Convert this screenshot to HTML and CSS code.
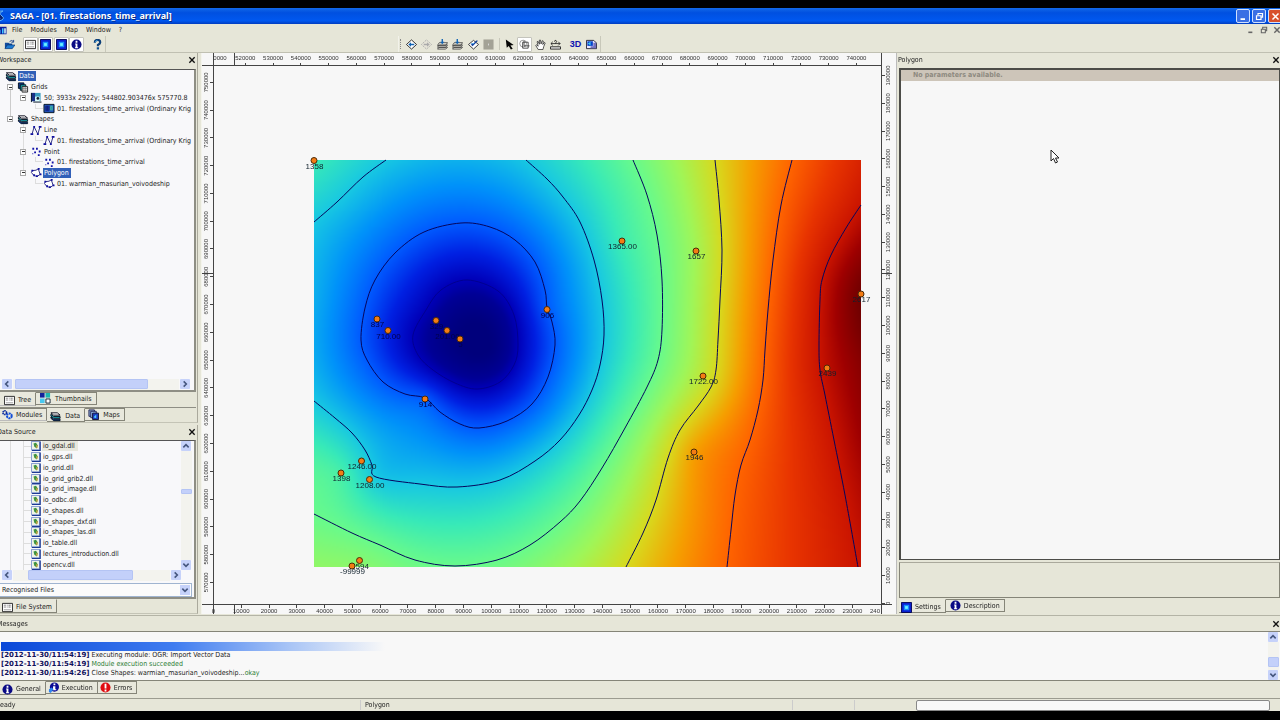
FILE: index.html
```html
<!DOCTYPE html>
<html lang="en">
<head>
<meta charset="utf-8">
<title>SAGA - [01. firestations_time_arrival]</title>
<link rel="stylesheet" href="styles.css">
</head>
<body>
<svg class="defs" aria-hidden="true">
  <defs>
    <symbol id="i-layers" viewBox="0 0 12 12"><path d="M1 2h7l3 2.500H4z" fill="#fff" stroke="#001"/><path d="M1 3.500L4 6h7v2H4L1 5.500z" fill="#1ca0a8" stroke="#012"/><path d="M1 6.500L4 9h7v1.500H4L1 8z" fill="#1238b0" stroke="#012"/></symbol>
    <symbol id="i-grids" viewBox="0 0 12 12"><path d="M1 1h6v6H1z" fill="#123a8c" stroke="#012"/><path d="M3 3h6v6H3z" fill="#19a5a5" stroke="#012"/><path d="M5 5h6v6H5z" fill="#fff" stroke="#222"/><path d="M7 5v6M9 5v6M5 7h6M5 9h6" stroke="#555" stroke-width=".6"/></symbol>
    <symbol id="i-system" viewBox="0 0 12 12"><path d="M1 1h10v9H1z" fill="#3a9cc0"/><path d="M1 1h4v9H1z" fill="#1a2f86"/><path d="M5 5h5v5H5z" fill="#dff"/><path d="M1 1v10M3 11h9" stroke="#012"/><circle cx="8" cy="7" r="1.500" fill="#123"/></symbol>
    <symbol id="i-grid" viewBox="0 0 12 12"><path d="M.5 1.500h11v9H.5z" fill="#2456b8" stroke="#012"/><path d="M2 3h4v6H2z" fill="#122a98"/><path d="M7 3h3v5H7z" fill="#3fc0b8"/><path d="M2 4.500h8M2 6.500h8M4 3v6M7 3v6" stroke="#113" stroke-width=".5" stroke-dasharray="1 1"/></symbol>
    <symbol id="i-line" viewBox="0 0 12 12"><path d="M1.500 10.500L4 2l4 8 2.500-8.500" fill="none" stroke="#22227c"/><path d="M0 9h3v2H0zM3 1h2v2H3zM7 9h2v2H7zM9 1h3v2H9z" fill="#1010a0"/></symbol>
    <symbol id="i-point" viewBox="0 0 12 12"><path d="M2 2h2v2H2zM6 2h2v2H6zM4 6h2v2H4zM9 5h2v2H9zM8 9h2v2H8zM2 8h1v1H2z" fill="#1212a8"/></symbol>
    <symbol id="i-poly" viewBox="0 0 12 12"><path d="M2 4l4-.5L8.500 2l2 6-3.500 2.500L3.500 9 1 6z" fill="#fff" stroke="#22227c"/><path d="M1 3h2v2H1zM8 1h2v2H8zM10 7h2v2h-2zM6 9h2v2H6zM3 8h2v2H3z" fill="#1010a0"/></symbol>
    <symbol id="i-open" viewBox="0 0 12 12"><path d="M1 4h4l1 1h3v5H1z" fill="#114b9c"/><path d="M1 10.500L3.500 6.500H12L9 10.500z" fill="#1c7bd4" stroke="#0a2a60" stroke-width=".6"/><path d="M6 3q2-2.500 4-.5M10.500 1v2.500H8" fill="none" stroke="#123c8c"/></symbol>
    <symbol id="i-win" viewBox="0 0 12 12"><path d="M.5 1.500h11v9H.5z" fill="#fff" stroke="#222"/><path d="M2 3.500h3M2 5.500h3M6 3.500h4M6 5.500h4" stroke="#555" stroke-dasharray="1 .6"/><path d="M2 8.500h8" stroke="#999"/></symbol>
    <symbol id="i-blue" viewBox="0 0 12 12"><path d="M.5.5h11v11H.5z" fill="#0a1fd0" stroke="#000050"/><path d="M3 3h6v6H3z" fill="#168cff"/><path d="M4.500 4.500h3v3h-3z" fill="#6ff4ff"/></symbol>
    <symbol id="i-info" viewBox="0 0 12 12"><circle cx="6" cy="6" r="5.500" fill="#0a0a84"/><path d="M5 2h2v2H5zM4.500 5H7v4h.8v1H4.300V9H5V6h-.5z" fill="#fff"/></symbol>
    <symbol id="i-exec" viewBox="0 0 12 12"><circle cx="7" cy="5.500" r="5" fill="#0a0a94"/><path d="M6 1.500h2v2H6zM5.500 4.500H8v3.500h1v1H5.500z" fill="#fff"/><path d="M1 8l3-2 2 2-3 4-2-1z" fill="#2f86f0"/></symbol>
    <symbol id="i-err" viewBox="0 0 12 12"><circle cx="6" cy="6" r="5.500" fill="#e00c10"/><path d="M5 2h2v5H5zM5 8.300h2v2H5z" fill="#fff"/></symbol>
    <symbol id="i-help" viewBox="0 0 12 12"><path d="M3 4q0-3 3-3t3 2.500Q9 5 6.500 6.500V8" fill="none" stroke="#0d3f78" stroke-width="2.400"/><path d="M3.500 3.500Q4 1.500 6 1.500" fill="none" stroke="#3da4e8"/><path d="M5.200 9h2.500v2.400H5.200z" fill="#0d4f90"/></symbol>
    <symbol id="i-prev" viewBox="0 0 12 12"><path d="M6 1l5.500 5L6 11 .5 6z" fill="#fff" stroke="#222"/><path d="M2.500 6l3-2.500v1.700h3.500v1.600H5.500v1.700z" fill="#1264b4"/></symbol>
    <symbol id="i-next" viewBox="0 0 12 12"><path d="M6 1l5.500 5L6 11 .5 6z" fill="#e6e4d8" stroke="#aaa" stroke-dasharray="2 1"/><path d="M9.500 6l-3-2.500v1.700H3v1.600h3.500v1.700z" fill="#aaa"/></symbol>
    <symbol id="i-stack" viewBox="0 0 12 12"><path d="M.5 11l2-2h9l-2 2zM.5 9l2-2.500h9l-2 2.500zM.5 7l2-3h9l-2 3z" fill="#e4e4da" stroke="#333" stroke-width=".8"/><path d="M5 0h1.500v3H8L5.700 5.800 3.500 3H5z" fill="#1264b4"/></symbol>
    <symbol id="i-sel" viewBox="0 0 12 12"><path d="M6 1.500L11.500 6 6 11 .5 6z" fill="#fff" stroke="#333"/><path d="M3 6l2 2 6-6-2-.5-3 3.500z" fill="#123f9c"/><path d="M3.500 5h3" stroke="#3f9de0"/></symbol>
    <symbol id="i-gray" viewBox="0 0 12 12"><path d="M.5.500h11v11H.5z" fill="#a3a296"/><path d="M6 5v2" stroke="#ddd"/></symbol>
    <symbol id="i-arrow" viewBox="0 0 12 12"><path d="M2 .5l1 9 2.200-2L7.500 11.500l2-1L7 7l3.500-.5z" fill="#050505"/></symbol>
    <symbol id="i-zoom" viewBox="0 0 12 12"><circle cx="4.500" cy="5" r="3.700" fill="none" stroke="#777" stroke-width=".8"/><path d="M4 3.500h6V10H4zM5.500 2v5.500H11.500" fill="none" stroke="#333" stroke-width=".9"/></symbol>
    <symbol id="i-hand" viewBox="0 0 12 12"><path d="M3.500 11.500L.8 7l1-.6 1.700 1.500L2.300 3l1-.5 1.500 3.200L4.800 1.200h1.200l.6 4.200L8 1.800l1 .4-.5 3.800 1.700-2.300.9.600-1.600 4-.8 3.200z" fill="#fff" stroke="#222" stroke-width=".8"/></symbol>
    <symbol id="i-measure" viewBox="0 0 12 12"><path d="M.5 11V8.500h11V11z" fill="#eee" stroke="#222"/><path d="M1 5h10M3 3L1 5l2 2M9 3l2 2-2 2M5 3q0-2 1.500-1.500T6 5" fill="none" stroke="#222" stroke-width=".9"/></symbol>
    <symbol id="i-print" viewBox="0 0 12 12"><path d="M.5 1.500h8l3 3v6H.5z" fill="#e8e8ff" stroke="#223"/><path d="M1.500 2.500h6v5h-6z" fill="#0840c8"/><path d="M2 5l3-2v4z" fill="#3cd0f0"/><path d="M8 4h3v6H5V8h3z" fill="#7472c0"/></symbol>
    <symbol id="i-thumbs" viewBox="0 0 12 12"><path d="M0 0h5v5H0z" fill="#12229c"/><path d="M6 0h5v5H6z" fill="#1fb6b0"/><path d="M0 6h5v5H0z" fill="#48c8f0"/><path d="M6.500 6.500h4.500v4.500H6.500z" fill="#fff" stroke="#123"/></symbol>
    <symbol id="i-gears" viewBox="0 0 12 12"><circle cx="3" cy="4" r="2" fill="none" stroke="#0b2b9c" stroke-width="1.800" stroke-dasharray="1.500 .5"/><circle cx="8" cy="7.500" r="2.600" fill="none" stroke="#1550d8" stroke-width="2.200" stroke-dasharray="2 .6"/></symbol>
    <symbol id="i-maps" viewBox="0 0 12 12"><path d="M1 1h6v7H1z" fill="#8ac" stroke="#225"/><path d="M3 2.500h6v7H3z" fill="#9be" stroke="#225"/><path d="M5 4.500h6.500v7H5z" fill="#1a3cc0" stroke="#113"/><path d="M6 9l3-3v4z" fill="#4bd0ff"/></symbol>
    <symbol id="i-dll" viewBox="0 0 12 12"><path d="M.5.500h10v10H.5z" fill="#eef4e8" stroke="#6c86c8"/><path d="M11 .5V11.500H1" fill="none" stroke="#1c3a94" stroke-width="1.500"/><path d="M3 3l3-1 2 3-1 4-3-2z" fill="#3f9440"/><path d="M6 5h2v3H6z" fill="#c0a040"/></symbol>
    <symbol id="i-saga" viewBox="0 0 12 12"><path d="M9 1Q1 1 4 5t1 6Q12 9 8 6T9 1z" fill="#0a2070" stroke="#5fb4ff"/></symbol>
    <symbol id="i-app" viewBox="0 0 12 12"><path d="M0 1h12v10H0z" fill="#0a1c9c"/><path d="M1 5h3v5H1zM6 3h2v7H6z" fill="#3fc8ff"/><path d="M9 3h2v7H9z" fill="#dff"/></symbol>
    <symbol id="i-x" viewBox="0 0 12 12"><path d="M2 2l8 8M10 2l-8 8" fill="none" stroke="currentColor" stroke-width="2"/></symbol>
    <symbol id="i-min" viewBox="0 0 12 12"><path d="M2 9.500h6" stroke="currentColor" stroke-width="2.400"/></symbol>
    <symbol id="i-rest" viewBox="0 0 12 12"><path d="M4 4V2h6v5H8M2 5h6v5H2z" fill="none" stroke="currentColor" stroke-width="1.600"/></symbol>
    <symbol id="i-left" viewBox="0 0 12 12"><path d="M8 2L4 6l4 4" fill="none" stroke="currentColor" stroke-width="2.400"/></symbol>
    <symbol id="i-right" viewBox="0 0 12 12"><path d="M4 2l4 4-4 4" fill="none" stroke="currentColor" stroke-width="2.400"/></symbol>
    <symbol id="i-up" viewBox="0 0 12 12"><path d="M2 8l4-4 4 4" fill="none" stroke="currentColor" stroke-width="2.400"/></symbol>
    <symbol id="i-down" viewBox="0 0 12 12"><path d="M2 4l4 4 4-4" fill="none" stroke="currentColor" stroke-width="2.400"/></symbol>
  </defs>
</svg>
<div class="app">
  <header class="title">
    <svg class="ico logo"><use href="#i-saga"/></svg>
    <h1>SAGA - [01. firestations_time_arrival]</h1>
    <div class="winbtns">
      <button aria-label="Minimize"><svg class="ico"><use href="#i-min"/></svg></button>
      <button aria-label="Restore"><svg class="ico"><use href="#i-rest"/></svg></button>
      <button class="red" aria-label="Close"><svg class="ico"><use href="#i-x"/></svg></button>
    </div>
  </header>
  <nav class="menu">
    <svg class="ico app-ico"><use href="#i-app"/></svg>
    <button>File</button><button>Modules</button><button>Map</button><button>Window</button><button>?</button>
    <div class="mdi">
      <button aria-label="Minimize map"><svg class="ico"><use href="#i-min"/></svg></button>
      <button aria-label="Restore map"><svg class="ico"><use href="#i-rest"/></svg></button>
      <button aria-label="Close map"><svg class="ico"><use href="#i-x"/></svg></button>
    </div>
  </nav>
  <div class="toolbars">
    <div class="bar first">
      <button aria-label="Open"><svg class="ico"><use href="#i-open"/></svg></button>
      <div class="pressed-group">
        <button class="on" aria-label="Show data source"><svg class="ico"><use href="#i-win"/></svg></button>
        <button class="on" aria-label="Show workspace"><svg class="ico"><use href="#i-blue"/></svg></button>
        <button class="on" aria-label="Show properties"><svg class="ico"><use href="#i-blue"/></svg></button>
        <button class="on" aria-label="Show messages"><svg class="ico"><use href="#i-info"/></svg></button>
      </div>
      <button aria-label="Help"><svg class="ico"><use href="#i-help"/></svg></button>
    </div>
    <div class="bar second">
      <span class="grip"></span>
      <div class="group g6">
        <button aria-label="Previous extent"><svg class="ico"><use href="#i-prev"/></svg></button>
        <button aria-label="Next extent"><svg class="ico"><use href="#i-next"/></svg></button>
        <button aria-label="Full extent"><svg class="ico"><use href="#i-stack"/></svg></button>
        <button aria-label="Layer extent"><svg class="ico"><use href="#i-stack"/></svg></button>
        <button aria-label="Selection extent"><svg class="ico"><use href="#i-sel"/></svg></button>
        <button aria-label="Synchronise" disabled><svg class="ico"><use href="#i-gray"/></svg></button>
      </div>
      <span class="sep"></span>
      <div class="group g4">
        <button aria-label="Action"><svg class="ico"><use href="#i-arrow"/></svg></button>
        <button class="on" aria-label="Zoom"><svg class="ico"><use href="#i-zoom"/></svg></button>
        <button aria-label="Pan"><svg class="ico"><use href="#i-hand"/></svg></button>
        <button aria-label="Measure"><svg class="ico"><use href="#i-measure"/></svg></button>
      </div>
      <div class="group g2">
        <button class="three-d">3D</button>
        <button aria-label="Print layout"><svg class="ico"><use href="#i-print"/></svg></button>
      </div>
    </div>
  </div>

  <main class="work">
    <aside class="left">
      <section class="pane workspace">
        <header class="cap"><h2>Workspace</h2><button aria-label="Close workspace"><svg class="ico"><use href="#i-x"/></svg></button></header>
        <div class="frame">
          <ul class="tree">
            <li class="l0"><svg class="ico"><use href="#i-layers"/></svg><span class="hit">Data</span></li>
            <li class="l1"><button class="exp" aria-label="Collapse Grids"></button><svg class="ico"><use href="#i-grids"/></svg><span>Grids</span></li>
            <li class="l2"><button class="exp" aria-label="Collapse grid system"></button><svg class="ico"><use href="#i-system"/></svg><span>50; 3933x 2922y; 544802.903476x 575770.8</span></li>
            <li class="l3"><i class="elbow"></i><svg class="ico"><use href="#i-grid"/></svg><span>01. firestations_time_arrival (Ordinary Krig</span></li>
            <li class="l1"><button class="exp" aria-label="Collapse Shapes"></button><svg class="ico"><use href="#i-layers"/></svg><span>Shapes</span></li>
            <li class="l2"><button class="exp" aria-label="Collapse Line"></button><svg class="ico"><use href="#i-line"/></svg><span>Line</span></li>
            <li class="l3"><i class="elbow"></i><svg class="ico"><use href="#i-line"/></svg><span>01. firestations_time_arrival (Ordinary Krig</span></li>
            <li class="l2"><button class="exp" aria-label="Collapse Point"></button><svg class="ico"><use href="#i-point"/></svg><span>Point</span></li>
            <li class="l3"><i class="elbow"></i><svg class="ico"><use href="#i-point"/></svg><span>01. firestations_time_arrival</span></li>
            <li class="l2"><button class="exp" aria-label="Collapse Polygon"></button><svg class="ico"><use href="#i-poly"/></svg><span class="hit">Polygon</span></li>
            <li class="l3"><i class="elbow"></i><svg class="ico"><use href="#i-poly"/></svg><span>01. warmian_masurian_voivodeship</span></li>
          </ul>
          <div class="hscroll wide"><button aria-label="Scroll left"><svg class="ico"><use href="#i-left"/></svg></button><div class="track"><div class="thumb"></div></div><button aria-label="Scroll right"><svg class="ico"><use href="#i-right"/></svg></button></div>
        </div>
        <div class="tabs inner"><button class="tab cur"><svg class="ico"><use href="#i-win"/></svg>Tree</button><button class="tab"><svg class="ico"><use href="#i-thumbs"/></svg>Thumbnails</button></div>
        <div class="tabs outer"><button class="tab"><svg class="ico"><use href="#i-gears"/></svg>Modules</button><button class="tab cur"><svg class="ico"><use href="#i-layers"/></svg>Data</button><button class="tab"><svg class="ico"><use href="#i-maps"/></svg>Maps</button></div>
      </section>
      <section class="pane source">
        <header class="cap"><h2>Data Source</h2><button aria-label="Close data source"><svg class="ico"><use href="#i-x"/></svg></button></header>
        <div class="frame files">
          <div class="listrow">
            <ul class="tree dlls">
              <li><svg class="ico"><use href="#i-dll"/></svg><span class="dim">io_gdal.dll</span></li>
              <li><svg class="ico"><use href="#i-dll"/></svg><span>io_gps.dll</span></li>
              <li><svg class="ico"><use href="#i-dll"/></svg><span>io_grid.dll</span></li>
              <li><svg class="ico"><use href="#i-dll"/></svg><span>io_grid_grib2.dll</span></li>
              <li><svg class="ico"><use href="#i-dll"/></svg><span>io_grid_image.dll</span></li>
              <li><svg class="ico"><use href="#i-dll"/></svg><span>io_odbc.dll</span></li>
              <li><svg class="ico"><use href="#i-dll"/></svg><span>io_shapes.dll</span></li>
              <li><svg class="ico"><use href="#i-dll"/></svg><span>io_shapes_dxf.dll</span></li>
              <li><svg class="ico"><use href="#i-dll"/></svg><span>io_shapes_las.dll</span></li>
              <li><svg class="ico"><use href="#i-dll"/></svg><span>io_table.dll</span></li>
              <li><svg class="ico"><use href="#i-dll"/></svg><span>lectures_introduction.dll</span></li>
              <li><svg class="ico"><use href="#i-dll"/></svg><span>opencv.dll</span></li>
            </ul>
            <div class="vscroll"><button aria-label="Scroll up"><svg class="ico"><use href="#i-up"/></svg></button><div class="track"><div class="thumb"></div></div><button aria-label="Scroll down"><svg class="ico"><use href="#i-down"/></svg></button></div>
          </div>
          <div class="hscroll narrow"><button aria-label="Scroll left"><svg class="ico"><use href="#i-left"/></svg></button><div class="track"><div class="thumb"></div></div><button aria-label="Scroll right"><svg class="ico"><use href="#i-right"/></svg></button></div>
          <div class="combo"><select aria-label="File filter"><option>Recognised Files</option></select><svg class="ico"><use href="#i-down"/></svg></div>
        </div>
        <div class="tabs inner"><button class="tab cur"><svg class="ico"><use href="#i-win"/></svg>File System</button></div>
      </section>
    </aside>

    <section class="map">
      <svg id="map" viewBox="202 53 694 561" role="img" aria-label="Map of arrival times">
        <foreignObject x="314" y="160" width="547" height="407"><canvas id="raster" width="274" height="204"></canvas></foreignObject>
      </svg>
    </section>

    <aside class="right">
      <header class="cap"><h2>Polygon</h2><button aria-label="Close settings"><svg class="ico"><use href="#i-x"/></svg></button></header>
      <div class="params"><p>No parameters available.</p>
        <svg class="pointer" viewBox="0 0 10 15"><path d="M1 1v11l2.500-2.500L5.500 14l2-1-2-4H9z" fill="#fff" stroke="#222"/></svg>
      </div>
      <div class="desc"></div>
      <div class="tabs inner"><button class="tab cur"><svg class="ico"><use href="#i-blue"/></svg>Settings</button><button class="tab"><svg class="ico"><use href="#i-info"/></svg>Description</button></div>
    </aside>
  </main>

  <section class="messages">
    <header class="cap"><h2>Messages</h2><button aria-label="Close messages"><svg class="ico"><use href="#i-x"/></svg></button></header>
    <div class="log">
      <div class="lines">
        <div class="band"></div>
        <p><b>[2012-11-30/11:54:19]</b> Executing module: OGR: Import Vector Data</p>
        <p><b>[2012-11-30/11:54:19]</b> <span class="ok">Module execution succeeded</span></p>
        <p><b>[2012-11-30/11:54:26]</b> Close Shapes: warmian_masurian_voivodeship...<span class="ok">okay</span></p>
      </div>
      <div class="vscroll"><button aria-label="Scroll up"><svg class="ico"><use href="#i-up"/></svg></button><div class="track"><div class="thumb"></div></div><button aria-label="Scroll down"><svg class="ico"><use href="#i-down"/></svg></button></div>
    </div>
    <div class="tabs inner"><button class="tab cur"><svg class="ico"><use href="#i-info"/></svg>General</button><button class="tab"><svg class="ico"><use href="#i-exec"/></svg>Execution</button><button class="tab"><svg class="ico"><use href="#i-err"/></svg>Errors</button></div>
  </section>
  <footer class="status"><span class="ready">Ready</span><span class="layer">Polygon</span><span class="cell"></span><span class="cell"></span><div class="progress" role="progressbar" aria-label="Progress" aria-valuenow="0"></div></footer>
</div>
<script src="map.js"></script>
</body>
</html>
```
FILE: styles.css
```css
* { box-sizing: border-box; }
html, body { height: 100%; margin: 0; }
body { background: #000; color: #222; font: 7px/10px "DejaVu Sans Condensed", "DejaVu Sans", sans-serif; overflow: hidden; }
button, select { font: inherit; color: inherit; background: none; border: 0; margin: 0; padding: 0; display: inline-flex; align-items: center; justify-content: center; white-space: nowrap; }
h1, h2, p, ul { margin: 0; padding: 0; font: inherit; list-style: none; white-space: nowrap; }
.defs { display: none; }
.ico { width: 11px; height: 11px; flex: none; display: block; }
.app { height: 100vh; padding: 8px 0 9px; display: flex; flex-direction: column; background: #e6e6d8; background-clip: content-box; }

.title { height: 16px; flex: none; display: flex; align-items: center; background: linear-gradient(#1268e8, #0050e0 30%, #0058f0 80%, #003cc0); color: #fff; }
.title h1 { font: bold 9px/12px "Noto Sans", "Open Sans", sans-serif; padding-left: 4px; flex: 1; text-shadow: 1px 1px 0 #0a2a80; }
.logo { width: 12px; height: 12px; margin-left: -6px; }
.winbtns { display: flex; gap: 2px; margin-right: -2px; }
.winbtns button { width: 14px; height: 14px; border: 1px solid #cfe0ff; border-radius: 2px; background: #3b6fe4; }
.winbtns .red { background: #d8502c; }
.winbtns .ico { width: 9px; height: 9px; }

.menu { height: 12px; flex: none; display: flex; align-items: center; gap: 8px; }
.menu .app-ico { width: 12px; height: 9px; margin-left: -4px; margin-right: -4px; }
.mdi { margin-left: auto; display: flex; gap: 5px; color: #666; margin-right: -1px; }
.mdi .ico { width: 8px; height: 8px; }

.toolbars { height: 17px; flex: none; display: flex; border-bottom: 1px solid #c0c0b2; }
.bar { display: flex; align-items: center; border-right: 1px solid #c8c8ba; }
.bar button { width: 15px; height: 15px; }
.bar .on { background: #fff; border: 1px solid #c4c4bc; border-radius: 1px; }
.first { width: 106px; padding-left: 2px; gap: 6px; flex: none; }
.pressed-group { display: flex; justify-content: space-between; width: 62px; }
.second { margin-left: 292px; padding: 0 1px; border-left: 1px solid #f2f2ea; }
.grip { width: 1px; height: 10px; border-left: 1px dotted #888; margin: 0 3px 0 0; }
.group { display: flex; justify-content: space-between; }
.g6 { width: 92px; }
.g4 { width: 61px; margin-right: 5px; }
.g2 { width: 31px; }
.sep { height: 12px; border-left: 1px solid #c8c8ba; margin: 0 2px 0 3px; }
.bar .three-d { font: bold 9px/10px "Liberation Sans", sans-serif; color: #0c10b0; }

.work { flex: 1; min-height: 0; display: grid; grid-template-columns: 202px minmax(0, 1fr) 30%; }
.cap { height: 13px; flex: none; display: flex; align-items: center; justify-content: space-between; }
.cap h2 { margin-left: -3px; }
.cap .ico { width: 8px; height: 8px; color: #111; }

.left { display: flex; flex-direction: column; gap: 2px; padding-right: 3px; border-right: 1px solid #f4f4ec; min-width: 0; }
.pane { display: flex; flex-direction: column; min-height: 0; border-right: 1px solid #aaa99c; padding-right: 1px; border-bottom: 1px solid #c4c4b6; }
.workspace { height: 370px; flex: none; }
.source { flex: 1; }
.frame { flex: 1; min-height: 0; margin-top: 3px; border-top: 1px solid #555; border-right: 2px solid #8e8e84; border-bottom: 2px solid #8e8e84; background: #f8f8fa; display: flex; flex-direction: column; overflow: hidden; padding-right: 2px; }
.source .frame { margin-top: 2px; }
.tree { height: 118px; flex: none; display: flex; flex-direction: column; margin-top: 1px; overflow: hidden; }
.workspace .tree { background: linear-gradient(#ccc, #ccc) 10px 14px / 1px 34px no-repeat, linear-gradient(#ddd, #ddd) 23px 52px / 1px 50px no-repeat; }
.tree li { flex: 1; min-height: 0; display: flex; align-items: center; }
.tree .ico { margin-right: 2px; }
.l0 { padding-left: 5px; }
.l1 { padding-left: 7px; }
.l2 { padding-left: 20px; }
.l3 { padding-left: 31px; }
.tree li > .ico { width: 12px; }
.exp { width: 6px; height: 6px; margin-right: 4px; border: 1px solid #a8a8a8; background: linear-gradient(#333, #333) center / 3px 1px no-repeat #fff; flex: none; }
.elbow { width: 8px; height: 5px; border-left: 1px solid #ddd; border-bottom: 1px solid #ddd; margin: 0 0 5px 4px; flex: none; }
.hit { background: #3160b8; color: #fff; padding: 0 2px 0 1px; margin-left: -1px; }
.workspace .hscroll { margin-top: auto; margin-bottom: 0; }
.hscroll { display: flex; height: 11px; flex: none; gap: 1px; margin: 0 2px 1px; }
.hscroll button, .vscroll button { width: 10px; height: 10px; background: #c6d2fa; border-radius: 1px; color: #45567e; flex: none; }
.hscroll .ico, .vscroll .ico { width: 8px; height: 8px; }
.track { flex: 1; background: #f3f3ee; }
.thumb { background: #c3d0fa; border: 1px solid #b4c4f4; border-radius: 1px; }
.hscroll .thumb { height: 10px; }
.wide .thumb { width: 80%; margin-left: 2px; }
.narrow { margin-right: 11px; }
.narrow .thumb { width: 67%; margin-left: 15px; }
.vscroll { width: 11px; display: flex; flex-direction: column; flex: none; }

.listrow { display: flex; }
.dlls { height: 129px; flex: 1; margin-top: 0; background: linear-gradient(#ddd, #ddd) 10px 0 / 1px 129px no-repeat, linear-gradient(#ddd, #ddd) 23px 0 / 1px 129px no-repeat; }
.dlls li::before { content: ""; width: 7px; border-top: 1px solid #ddd; margin-left: 24px; }
.dlls li > .ico { width: 10px; height: 10px; margin-right: 2px; }
.dim { background: #e8e8de; padding: 0 3px 0 1px; margin-left: -1px; }
.listrow .thumb { height: 5px; margin-top: 38px; }
.listrow .vscroll { margin-right: 0; }
.combo { display: flex; align-items: center; height: 14px; margin-top: auto; border: 1px solid #9fb4d0; border-left: 0; background: #fbfbfb; padding: 0 1px 0 2px; }
.combo select { appearance: none; flex: 1; outline: 0; display: block; }
.combo .ico { background: #c6d2fa; color: #45567e; width: 10px; height: 10px; padding: 1px; }

.tabs { display: flex; flex: none; height: 15px; align-items: flex-start; }
.source .tabs { height: 14px; }
.tab { height: 13px; gap: 3px; padding: 0 4px 0 2px; border: solid #858578; border-width: 1px 1px 1px 0; background: #e8e8dc; }
.tab.cur { border-top-color: transparent; height: 14px; padding-top: 2px; }
.tab .ico { width: 11px; height: 11px; }
.workspace .inner .tab { padding-left: 4px; }
.workspace .inner .tab:last-child { gap: 4px; }
.workspace .tabs.outer { border-top: 1px solid #8e8e84; }
.workspace .outer .tab + .tab { gap: 4px; padding-left: 3px; }
.workspace .tabs.outer .tab:first-child, .workspace .tabs.inner .tab.cur { border-left: 0; border-bottom-color: #bbb; }

.map { min-width: 0; background: #f7f7f7; display: flex; }
#map { width: 100%; height: 100%; display: block; }
#raster { width: 547px; height: 407px; display: block; }
.axis { font: 6px "Liberation Sans", Arial, sans-serif; fill: #333; text-anchor: middle; }
.rule { stroke: #444; stroke-width: 1; shape-rendering: crispEdges; fill: none; }
.contour { fill: none; stroke: #06065c; stroke-width: 1; }
.contour.deep { stroke: #000090; }
.station circle { fill: #f47c14; stroke: #4a2a08; }
.station text { font: 8px "Liberation Sans", Arial, sans-serif; fill: #10202c; text-anchor: middle; }
.station .dark { fill: #00004c; }

.right { display: flex; flex-direction: column; padding-left: 2px; border-left: 1px solid #bbb; min-width: 0; }
.right .cap h2 { margin-left: -1px; }
.params { flex: 1; position: relative; margin-top: 2px; border: solid #4c4c48; border-width: 2px 1px 1px 2px; background: #f7f7f7; }
.params p { height: 11px; background: #cdc5b9; color: #8d8a80; font-weight: bold; padding-left: 12px; }
.pointer { position: absolute; left: 39.5%; top: 79px; width: 10px; height: 15px; }
.desc { height: 36px; flex: none; margin-top: 2px; border: 1px solid #858578; border-top-color: #aaa99c; }
.right .tabs { margin-top: 1px; }
.right .tab { padding-left: 4px; }
.right .tab.cur { padding-left: 2px; }

.messages { flex: none; display: flex; flex-direction: column; border-top: 1px solid #b4b4a6; margin-top: 1px; padding-top: 1px; }
.log { display: flex; height: 50px; border: solid #858578; border-width: 1px 0; margin-top: 1px; background: #f8f8f8; padding: 0 1px; }
.lines { flex: 1; padding-top: 10px; }
.lines p { line-height: 9px; }
.lines b { color: #10105c; font-family: "DejaVu Sans", sans-serif; }
.ok { color: #2c7c34; }
.band { height: 9px; width: 384px; background: linear-gradient(90deg, #0a48d8, #3f7cf0 45%, #a8c4f6 75%, #f8f8f8); }
.log .thumb { height: 10px; margin-top: 15px; }
.messages .tabs { height: 17px; }

.status { height: 13px; flex: none; border-top: 1px solid #9c9c90; display: flex; align-items: center; }
.ready { width: 364px; margin-left: -4px; }
.layer { flex: 1; padding-left: 4px; border-left: 1px solid #ccc; }
.cell { width: 62px; height: 10px; border-left: 1px solid #ccc; }
.progress { width: 354px; height: 11px; margin-right: 10px; border: 1px solid #888; border-radius: 2px; background: #f8f8f8; }
```
FILE: map.js
```js
const NS = 'http://www.w3.org/2000/svg';
const map = document.getElementById('map');

function add(parent, tag, attrs, text) {
  const el = document.createElementNS(NS, tag);
  for (const k in attrs) el.setAttribute(k, attrs[k]);
  if (text !== undefined) el.textContent = text;
  parent.appendChild(el);
  return el;
}

const contours = [
  { v: 1200, p: [314,222, 337,202, 363,177, 386,160] },
  { v: 1200, p: [526,160, 547,179, 563,197, 580,222, 594,260, 602,300, 604,335, 600,365, 592,390, 579,415, 560,440, 535,461, 500,480, 457,487, 420,484, 376,477, 372,465, 365,450, 352,433, 335,418, 314,401] },
  { v: 900, closed: true, p: [461,223, 424,232, 395,253, 375,280, 365,308, 361,340, 367,360, 383,382, 405,394, 425,398, 440,412, 460,424, 479,428, 507,421, 532,404, 548,377, 555,345, 552,322, 547,308, 545,290, 535,262, 515,240, 490,227] },
  { v: 600, closed: true, deep: true, p: [467,280, 441,290, 426,310, 413,335, 418,355, 433,370, 455,383, 477,389, 500,382, 514,365, 518,345, 514,315, 498,291] },
  { v: 1500, p: [633,160, 647,195, 657,235, 662,280, 662,330, 658,360, 647,387, 625,428, 602,468, 580,501, 560,522, 530,545, 497,560, 455,566, 415,560, 380,545, 352,533, 314,514] },
  { v: 1800, p: [715,160, 719,200, 722,250, 720,300, 718,340, 716,370, 711,387, 698,406, 680,430, 668,458, 656,500, 643,533, 626,567] },
  { v: 2100, p: [792,160, 781,205, 773,260, 768,310, 765,350, 763,380, 758,410, 750,440, 741,465, 735,495, 731,530, 727,567] },
  { v: 2400, p: [861,205, 846,228, 831,255, 822,280, 820,300, 819,345, 820,370, 825,395, 834,440, 845,495, 858,567] }
];

const anchors = [
  [861,294,2617], [314,160,1358], [352,566,1594], [314,567,1610], [622,241,1365], [696,251,1657],
  [341,473,1398], [861,160,2330], [861,440,2500], [480,345,380], [465,320,400], [490,350,380],
  [470,355,390], [485,325,390], [314,300,1130], [840,330,2510], [861,360,2560], [694,452,1946]
];

const palette = [
  [380,0,0,124], [520,0,0,150], [600,0,0,184], [750,0,32,226], [900,0,90,255], [1050,0,146,250],
  [1200,24,200,226], [1350,56,234,184], [1500,104,250,140], [1650,160,246,88], [1800,216,218,30],
  [1950,246,158,0], [2100,255,100,0], [2250,232,52,0], [2400,202,20,0], [2500,158,0,0], [2617,112,0,0]
];

function colour(v) {
  if (v <= palette[0][0]) return palette[0].slice(1);
  for (let i = 1; i < palette.length; i++) {
    const a = palette[i - 1], b = palette[i];
    if (v <= b[0]) {
      const t = (v - a[0]) / (b[0] - a[0]);
      return [1, 2, 3].map(k => a[k] + (b[k] - a[k]) * t);
    }
  }
  return palette[palette.length - 1].slice(1);
}

/* Thin-plate spline through the contour vertices and stations. */
function kernel(r2) { return r2 < 1e-9 ? 0 : r2 * Math.log(r2); }

function fit(pts) {
  const n = pts.length, m = n + 3, A = [];
  for (let i = 0; i < m; i++) A.push(new Float64Array(m + 1));
  for (let i = 0; i < n; i++) {
    for (let j = 0; j < n; j++) A[i][j] = kernel((pts[i][0] - pts[j][0]) ** 2 + (pts[i][1] - pts[j][1]) ** 2);
    A[i][i] += 0.002;
    [1, pts[i][0], pts[i][1]].forEach((q, k) => { A[i][n + k] = q; A[n + k][i] = q; });
    A[i][m] = pts[i][2];
  }
  for (let c = 0; c < m; c++) {
    let p = c;
    for (let r = c + 1; r < m; r++) if (Math.abs(A[r][c]) > Math.abs(A[p][c])) p = r;
    [A[c], A[p]] = [A[p], A[c]];
    for (let r = c + 1; r < m; r++) {
      const f = A[r][c] / A[c][c];
      if (f) for (let k = c; k <= m; k++) A[r][k] -= f * A[c][k];
    }
  }
  const w = new Float64Array(m);
  for (let r = m - 1; r >= 0; r--) {
    let s = A[r][m];
    for (let k = r + 1; k < m; k++) s -= A[r][k] * w[k];
    w[r] = s / A[r][r];
  }
  return w;
}

function drawRaster() {
  const pts = [];
  const push = (x, y, v) => pts.push([(x - 588) / 270, (y - 364) / 270, v]);
  contours.forEach(c => { for (let i = 0; i < c.p.length; i += 2) push(c.p[i], c.p[i + 1], c.v); });
  anchors.forEach(a => push(...a));
  const w = fit(pts), n = pts.length;
  const cv = document.getElementById('raster'), ctx = cv.getContext('2d');
  const img = ctx.createImageData(cv.width, cv.height);
  for (let j = 0; j < cv.height; j++) for (let i = 0; i < cv.width; i++) {
    const x = (314 + (i + .5) * 547 / cv.width - 588) / 270, y = (160 + (j + .5) * 407 / cv.height - 364) / 270;
    let s = w[n] + w[n + 1] * x + w[n + 2] * y;
    for (let k = 0; k < n; k++) s += w[k] * kernel((x - pts[k][0]) ** 2 + (y - pts[k][1]) ** 2);
    const c = colour(s), o = (j * cv.width + i) * 4;
    img.data[o] = c[0]; img.data[o + 1] = c[1]; img.data[o + 2] = c[2]; img.data[o + 3] = 255;
  }
  ctx.putImageData(img, 0, 0);
}

function smooth(p, closed) {
  const n = p.length / 2;
  const at = i => { i = closed ? (i + n) % n : Math.max(0, Math.min(n - 1, i)); return [p[2 * i], p[2 * i + 1]]; };
  let d = 'M' + at(0);
  for (let i = 0; i < (closed ? n : n - 1); i++) {
    const [a, b, c, e] = [at(i - 1), at(i), at(i + 1), at(i + 2)];
    d += `C${b[0] + (c[0] - a[0]) / 6},${b[1] + (c[1] - a[1]) / 6} ${c[0] - (e[0] - b[0]) / 6},${c[1] - (e[1] - b[1]) / 6} ${c[0]},${c[1]}`;
  }
  return d;
}

function drawRulers() {
  const step = 27.78;
  add(map, 'path', { class: 'rule', d: 'M202 65.5H881M213.500 53V614M881.500 53V614M202 604.500H892M234.500 53V65M234.500 604V614M202 273.500H213M881 273.500H892' });
  const g = add(map, 'g', { class: 'axis' });
  let ticks = '';
  add(g, 'text', { x: 220, y: 60 }, '0000');
  for (let i = 0; i < 23; i++) {
    const x = 245.3 + i * step;
    add(g, 'text', { x, y: 60 }, 520000 + i * 10000);
    ticks += `M${x} 63V65`;
  }
  for (let i = 0; i < 24; i++) {
    const x = 213.5 + i * step;
    add(g, 'text', { x, y: 613 }, i * 10000);
    ticks += `M${x} 605V608`;
  }
  add(g, 'text', { x: 875, y: 613 }, '240');
  for (let i = 0; i < 19; i++) {
    const y = 82.3 + i * step;
    add(g, 'text', { transform: `translate(208 ${y}) rotate(-90)` }, 750000 - i * 10000);
    ticks += `M210 ${y}H213`;
  }
  for (let i = 0; i < 20; i++) {
    const y = 75.5 + i * step;
    add(g, 'text', { transform: `translate(890 ${y}) rotate(-90)` }, 190000 - i * 10000);
    ticks += `M882 ${y}H885`;
  }
  add(map, 'path', { class: 'rule', d: ticks });
}

const stations = [
  [314,160.5,'1358'], [377,319,'837',1], [388,330.500,'710.00',1], [436,320.500,'329',1], [447,330.500,'201.00',1], [460,339,'5',1],
  [547,309.500,'906',1], [425,399,'914',1], [622,241,'1365.00'], [696,251,'1657'], [703,376,'1722.00'], [694,452,'1946'],
  [361.500,461,'1246.00'], [341,473,'1398'], [369.500,479.500,'1208.00'], [359.500,560.500,'1594'], [352,566,'-99999'],
  [861,294,'2617'], [827,368,'2439']
];

drawRaster();
contours.forEach(c => add(map, 'path', { class: 'contour' + (c.deep ? ' deep' : ''), d: smooth(c.p, c.closed) }));
drawRulers();
stations.forEach(([x, y, t, dark]) => {
  const g = add(map, 'g', { class: 'station' });
  add(g, 'circle', { cx: x, cy: y, r: 3 });
  add(g, 'text', { x: x + .5, y: y + 8, class: dark ? 'dark' : '' }, t);
});
```
